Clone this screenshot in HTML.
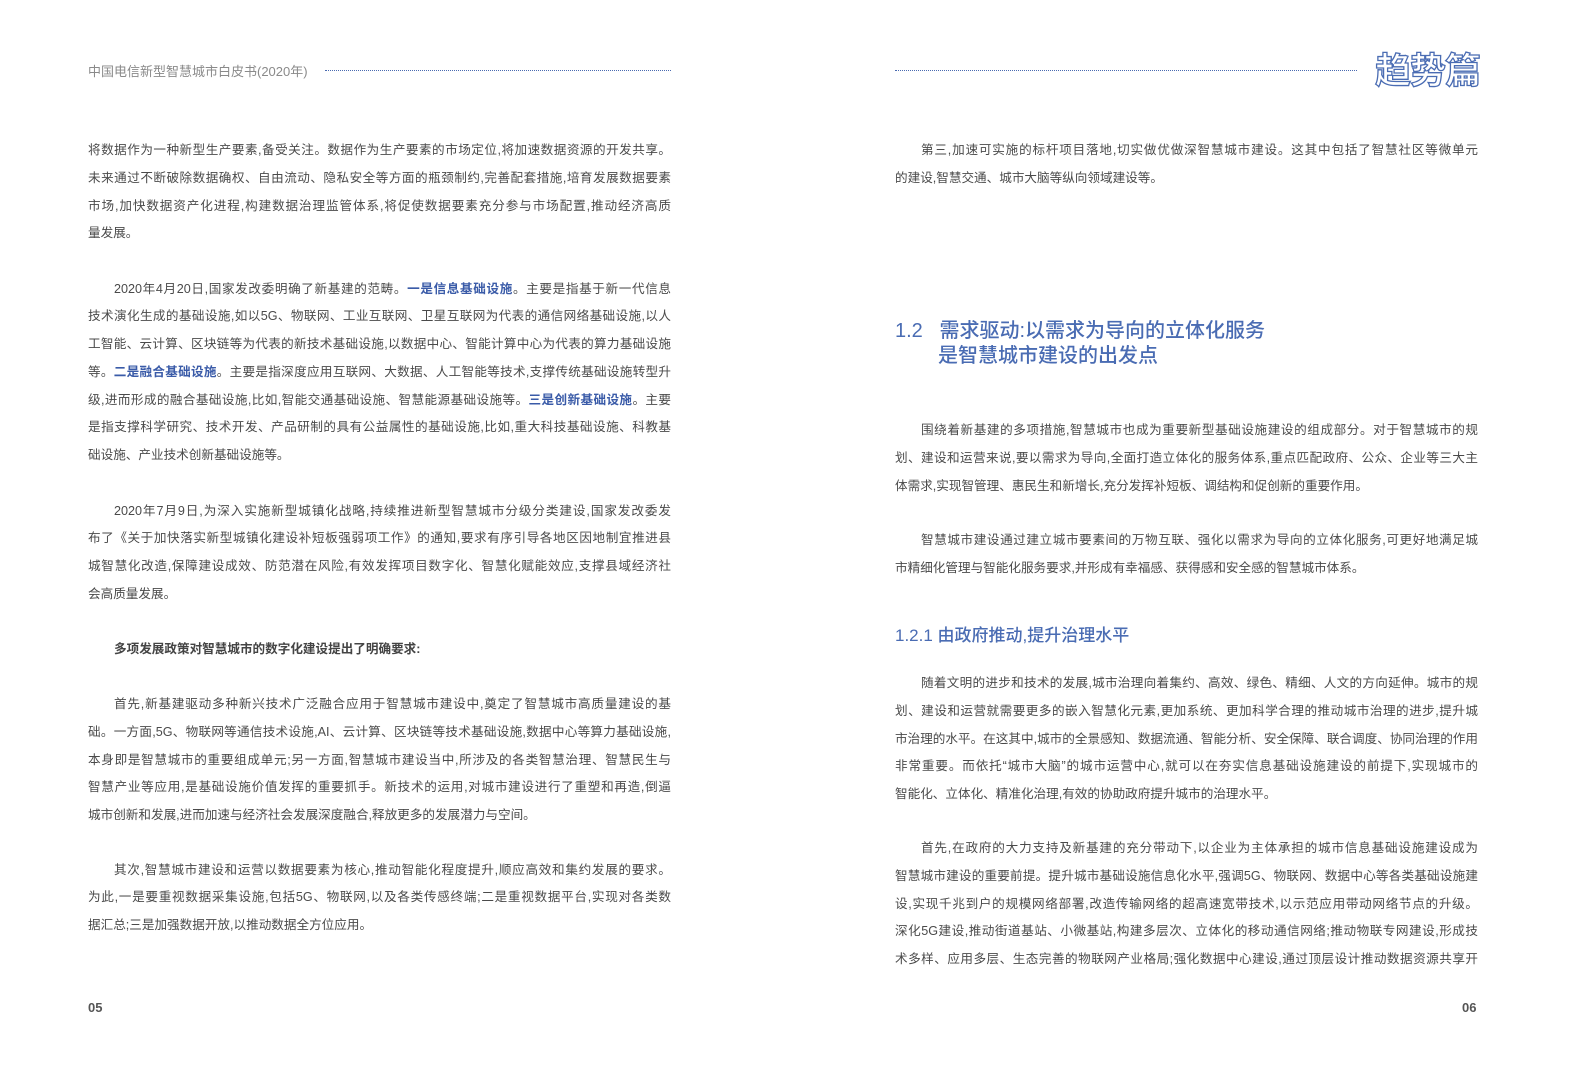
<!DOCTYPE html>
<html><head><meta charset="utf-8">
<style>
*{margin:0;padding:0;box-sizing:border-box}
body{width:1587px;height:1077px;background:#fff;position:relative;overflow:hidden;font-family:"Liberation Sans","Noto Sans CJK SC",sans-serif;color:#4a4a4a;font-size:12.6px}
.col{position:absolute;width:583px}
.p{position:absolute;left:0;width:583px}
.l{height:27.75px;line-height:27.75px;text-align:justify;text-align-last:justify;overflow:hidden;word-break:break-all}
.e{text-align-last:left}
.i{padding-left:26px}
.b{color:#3a5ba8;font-weight:bold}
.hdr{position:absolute;font-size:13px;color:#8a8a8a}
.dots{position:absolute;border-top:1px dotted #4a6ab0;height:0}
h2{position:absolute;font-weight:500;color:#4a6cb3;font-size:20px;line-height:25px}
.pn{position:absolute;top:1000px;font-size:13px;color:#555;font-weight:bold}
</style></head><body>
<div class="hdr" style="left:88px;top:61px">中国电信新型智慧城市白皮书(2020年)</div>
<div class="dots" style="left:325px;top:70px;width:346px"></div>
<div class="dots" style="left:895px;top:70px;width:462px"></div>
<div style="position:absolute;left:1375px;top:50px;font-size:36px;line-height:42px;font-weight:bold;color:#fff;-webkit-text-stroke:1.3px #4a6cb3;letter-spacing:-1px">趋势篇</div>

<div class="col" style="left:88px;top:137px">
<div class="p" style="top:0">
<div class="l">将数据作为一种新型生产要素,备受关注。数据作为生产要素的市场定位,将加速数据资源的开发共享。</div>
<div class="l">未来通过不断破除数据确权、自由流动、隐私安全等方面的瓶颈制约,完善配套措施,培育发展数据要素</div>
<div class="l">市场,加快数据资产化进程,构建数据治理监管体系,将促使数据要素充分参与市场配置,推动经济高质</div>
<div class="l e">量发展。</div>
</div>
<div class="p" style="top:138.5px">
<div class="l i">2020年4月20日,国家发改委明确了新基建的范畴。<span class="b">一是信息基础设施</span>。主要是指基于新一代信息</div>
<div class="l">技术演化生成的基础设施,如以5G、物联网、工业互联网、卫星互联网为代表的通信网络基础设施,以人</div>
<div class="l">工智能、云计算、区块链等为代表的新技术基础设施,以数据中心、智能计算中心为代表的算力基础设施</div>
<div class="l">等。<span class="b">二是融合基础设施</span>。主要是指深度应用互联网、大数据、人工智能等技术,支撑传统基础设施转型升</div>
<div class="l">级,进而形成的融合基础设施,比如,智能交通基础设施、智慧能源基础设施等。<span class="b">三是创新基础设施</span>。主要</div>
<div class="l">是指支撑科学研究、技术开发、产品研制的具有公益属性的基础设施,比如,重大科技基础设施、科教基</div>
<div class="l e">础设施、产业技术创新基础设施等。</div>
</div>
<div class="p" style="top:360.5px">
<div class="l i">2020年7月9日,为深入实施新型城镇化战略,持续推进新型智慧城市分级分类建设,国家发改委发</div>
<div class="l">布了《关于加快落实新型城镇化建设补短板强弱项工作》的通知,要求有序引导各地区因地制宜推进县</div>
<div class="l">城智慧化改造,保障建设成效、防范潜在风险,有效发挥项目数字化、智慧化赋能效应,支撑县域经济社</div>
<div class="l e">会高质量发展。</div>
</div>
<div class="p" style="top:498.5px">
<div class="l e i" style="font-weight:bold;color:#444">多项发展政策对智慧城市的数字化建设提出了明确要求:</div>
</div>
<div class="p" style="top:554px">
<div class="l i">首先,新基建驱动多种新兴技术广泛融合应用于智慧城市建设中,奠定了智慧城市高质量建设的基</div>
<div class="l">础。一方面,5G、物联网等通信技术设施,AI、云计算、区块链等技术基础设施,数据中心等算力基础设施,</div>
<div class="l">本身即是智慧城市的重要组成单元;另一方面,智慧城市建设当中,所涉及的各类智慧治理、智慧民生与</div>
<div class="l">智慧产业等应用,是基础设施价值发挥的重要抓手。新技术的运用,对城市建设进行了重塑和再造,倒逼</div>
<div class="l e">城市创新和发展,进而加速与经济社会发展深度融合,释放更多的发展潜力与空间。</div>
</div>
<div class="p" style="top:719.5px">
<div class="l i">其次,智慧城市建设和运营以数据要素为核心,推动智能化程度提升,顺应高效和集约发展的要求。</div>
<div class="l">为此,一是要重视数据采集设施,包括5G、物联网,以及各类传感终端;二是重视数据平台,实现对各类数</div>
<div class="l e">据汇总;三是加强数据开放,以推动数据全方位应用。</div>
</div>
</div>

<div class="col" style="left:895px;top:137px">
<div class="p" style="top:0">
<div class="l i">第三,加速可实施的标杆项目落地,切实做优做深智慧城市建设。这其中包括了智慧社区等微单元</div>
<div class="l e">的建设,智慧交通、城市大脑等纵向领域建设等。</div>
</div>
<div class="p" style="top:280px">
<div class="l i">围绕着新基建的多项措施,智慧城市也成为重要新型基础设施建设的组成部分。对于智慧城市的规</div>
<div class="l">划、建设和运营来说,要以需求为导向,全面打造立体化的服务体系,重点匹配政府、公众、企业等三大主</div>
<div class="l e">体需求,实现智管理、惠民生和新增长,充分发挥补短板、调结构和促创新的重要作用。</div>
</div>
<div class="p" style="top:390px">
<div class="l i">智慧城市建设通过建立城市要素间的万物互联、强化以需求为导向的立体化服务,可更好地满足城</div>
<div class="l e">市精细化管理与智能化服务要求,并形成有幸福感、获得感和安全感的智慧城市体系。</div>
</div>
<div class="p" style="top:533px">
<div class="l i">随着文明的进步和技术的发展,城市治理向着集约、高效、绿色、精细、人文的方向延伸。城市的规</div>
<div class="l">划、建设和运营就需要更多的嵌入智慧化元素,更加系统、更加科学合理的推动城市治理的进步,提升城</div>
<div class="l">市治理的水平。在这其中,城市的全景感知、数据流通、智能分析、安全保障、联合调度、协同治理的作用</div>
<div class="l">非常重要。而依托“城市大脑”的城市运营中心,就可以在夯实信息基础设施建设的前提下,实现城市的</div>
<div class="l e">智能化、立体化、精准化治理,有效的协助政府提升城市的治理水平。</div>
</div>
<div class="p" style="top:698px">
<div class="l i">首先,在政府的大力支持及新基建的充分带动下,以企业为主体承担的城市信息基础设施建设成为</div>
<div class="l">智慧城市建设的重要前提。提升城市基础设施信息化水平,强调5G、物联网、数据中心等各类基础设施建</div>
<div class="l">设,实现千兆到户的规模网络部署,改造传输网络的超高速宽带技术,以示范应用带动网络节点的升级。</div>
<div class="l">深化5G建设,推动街道基站、小微基站,构建多层次、立体化的移动通信网络;推动物联专网建设,形成技</div>
<div class="l">术多样、应用多层、生态完善的物联网产业格局;强化数据中心建设,通过顶层设计推动数据资源共享开</div>
</div>
</div>

<h2 style="left:895px;top:319px">1.2&nbsp;&nbsp;&nbsp;需求驱动:以需求为导向的立体化服务</h2>
<h2 style="left:938px;top:344px">是智慧城市建设的出发点</h2>
<h2 style="left:895px;top:623px;font-size:17px">1.2.1 由政府推动,提升治理水平</h2>

<div class="pn" style="left:88px">05</div>
<div class="pn" style="left:1462px">06</div>
</body></html>
